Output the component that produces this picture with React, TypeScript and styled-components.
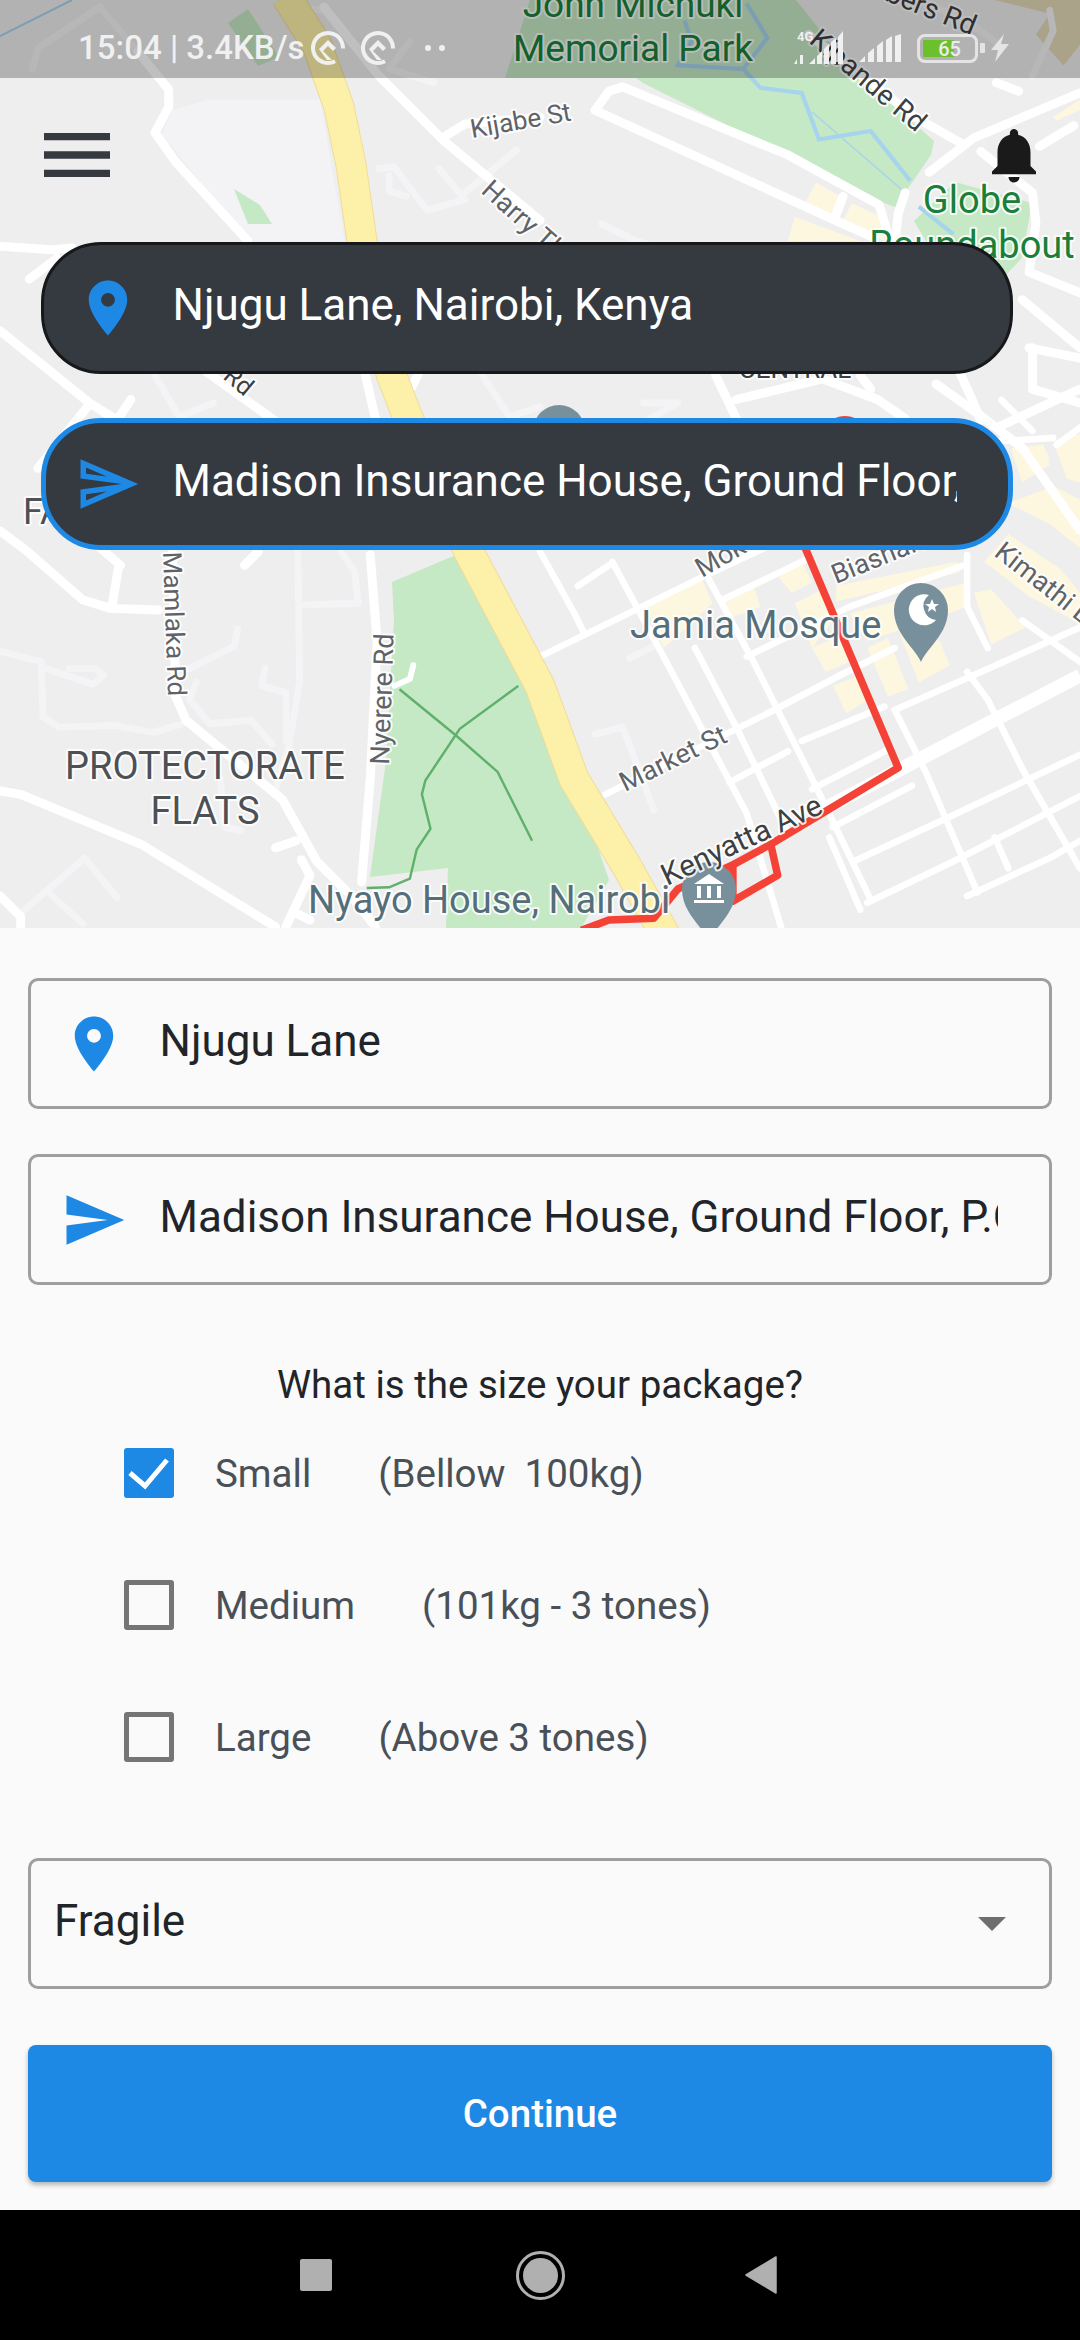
import React from 'react';
import styled, { createGlobalStyle } from 'styled-components';

const GlobalStyle = createGlobalStyle`
	* {
		box-sizing: border-box;
	}
	html,
	body {
		margin: 0;
		padding: 0;
		background: #fafafa;
		font-family: 'Roboto', 'Liberation Sans', sans-serif;
	}
`;

const Screen = styled.div`
	width: 1080px;
	height: 2340px;
	display: flex;
	flex-direction: column;
	background: #fafafa;
	overflow: hidden;
`;

const MapArea = styled.div`
	position: relative;
	height: 928px;
	flex: none;
	overflow: hidden;
	background: #eeeeee;
`;

const MapCanvas = styled.svg`
	position: absolute;
	inset: 0;
`;

const MapOverlay = styled.div`
	position: absolute;
	inset: 0;
	display: flex;
	flex-direction: column;
`;

const StatusBar = styled.div`
	height: 78px;
	flex: none;
	display: flex;
	align-items: center;
	padding: 0 0 0 78px;
	background: rgba(0, 0, 0, 0.25);
	color: #f0f0f0;
`;

const StatusText = styled.span`
	font-size: 33px;
	font-weight: 500;
	margin-top: 18px;
	line-height: 40px;
	white-space: nowrap;
	width: 231px;
`;

const StatusIcon = styled.svg<{ $left?: number }>`
	flex: none;
	margin-left: ${(p) => p.$left || 0}px;
	margin-top: 18px;
`;

const Battery = styled.div`
	position: relative;
	flex: none;
	width: 61px;
	height: 29px;
	margin-left: 16px;
	margin-top: 19px;
	border: 3.5px solid #e4e4e4;
	border-radius: 8px;
	color: #ececec;
	font-size: 20px;
	font-weight: 500;
	display: flex;
	align-items: center;
	justify-content: center;
`;

const BatteryFill = styled.div<{ $level: number }>`
	position: absolute;
	left: 3px;
	top: 3px;
	bottom: 3px;
	width: ${(p) => p.$level}%;
	background: #6cc02c;
`;

const BatteryLabel = styled.span`
	position: relative;
	margin-left: 4px;
	line-height: 1;
`;

const TopRow = styled.div`
	height: 164px;
	flex: none;
	display: flex;
	justify-content: space-between;
	align-items: flex-start;
	padding: 33px 33px 0;
`;

const BellIcon = styled.svg`
	margin-top: 11px;
`;

const Pill = styled.div<{ $active?: boolean }>`
	width: 972px;
	height: 132px;
	flex: none;
	margin: 0 0 44px 41px;
	display: flex;
	align-items: center;
	gap: 32px;
	padding-left: ${(p) => (p.$active ? 28.5 : 30.5)}px;
	background: #343a40;
	border: ${(p) => (p.$active ? '5px solid #1e88e5' : '3px solid #16181b')};
	border-radius: 60px;
`;

const PillText = styled.div`
	width: 784px;
	overflow: hidden;
	white-space: nowrap;
	color: #fff;
	font-size: 44px;
	line-height: 54px;
	margin-bottom: 6px;
`;

const Form = styled.div`
	flex: 1;
	display: flex;
	flex-direction: column;
	padding: 50px 28px 0;
`;

const Field = styled.div<{ $gap?: number }>`
	height: 131px;
	flex: none;
	margin-bottom: ${(p) => p.$gap || 0}px;
	display: flex;
	align-items: center;
	gap: 33px;
	padding-left: 29.5px;
	border: 3px solid #9e9e9e;
	border-radius: 10px;
`;

const FieldText = styled.div`
	width: 838px;
	overflow: hidden;
	white-space: nowrap;
	color: #212529;
	font-size: 44px;
	line-height: 54px;
	margin-bottom: 6px;
`;

const Question = styled.div`
	margin: 78px 0 41px;
	text-align: center;
	color: #212529;
	font-size: 38.5px;
	line-height: 44px;
`;

const Options = styled.div`
	display: flex;
	flex-direction: column;
	gap: 82px;
	padding-left: 96px;
`;

const Option = styled.div`
	height: 50px;
	display: flex;
	align-items: center;
	color: #495057;
	font-size: 38.5px;
`;

const Box = styled.div<{ $checked?: boolean }>`
	width: 50px;
	height: 50px;
	flex: none;
	margin-right: 41px;
	border-radius: 3px;
	background: ${(p) => (p.$checked ? '#1e88e5' : 'transparent')};
	border: ${(p) => (p.$checked ? 'none' : '5px solid #757575')};
`;

const Hint = styled.span`
	margin-left: 67px;
	white-space: pre;
`;

const Select = styled.div`
	height: 131px;
	flex: none;
	margin-top: 96px;
	display: flex;
	align-items: center;
	justify-content: space-between;
	padding: 0 43px 0 23px;
	border: 3px solid #9e9e9e;
	border-radius: 10px;
`;

const SelectValue = styled.span`
	color: #212529;
	font-size: 44px;
	line-height: 54px;
	margin-bottom: 6px;
`;

const Caret = styled.div`
	width: 0;
	height: 0;
	border-left: 14px solid transparent;
	border-right: 14px solid transparent;
	border-top: 14px solid #6e6e6e;
`;

const ContinueButton = styled.button`
	height: 137px;
	flex: none;
	margin-top: 56px;
	border: none;
	border-radius: 8px;
	background: #1e88e5;
	box-shadow: 0 3px 5px rgba(0, 0, 0, 0.28);
	color: #fff;
	font-family: inherit;
	font-size: 38.5px;
	font-weight: 500;
`;

const NavBar = styled.div`
	height: 130px;
	flex: none;
	display: flex;
	align-items: center;
	padding-left: 300px;
	gap: 180px;
	background: #000;
`;

const NavSquare = styled.div`
	width: 32px;
	height: 32px;
	border-radius: 2px;
	background: #b0b0b0;
	margin-right: 4px;
`;

const NavCircle = styled.div`
	width: 49px;
	height: 49px;
	border-radius: 50%;
	border: 3px solid #b0b0b0;
	padding: 4px;
	&::after {
		content: '';
		display: block;
		width: 100%;
		height: 100%;
		border-radius: 50%;
		background: #b0b0b0;
	}
`;

const MapLabel = styled.text<{ $size: number; $color: string }>`
	font-family: 'Roboto', sans-serif;
	font-size: ${(p) => p.$size}px;
	fill: ${(p) => p.$color};
	stroke: rgba(255, 255, 255, 0.85);
	stroke-width: 4px;
	paint-order: stroke;
	stroke-linejoin: round;
`;

const PIN =
	'M12 2C8.13 2 5 5.13 5 9c0 5.25 7 13 7 13s7-7.75 7-13c0-3.87-3.13-7-7-7zm0 9.5c-1.38 0-2.5-1.12-2.5-2.5s1.12-2.5 2.5-2.5 2.5 1.12 2.5 2.5-1.12 2.5-2.5 2.5z';
const SEND = 'M2.01 21L23 12 2.01 3 2 10l15 2-15 2z';
const SEND_OUTLINE =
	'M4.01 6.03l7.51 3.22-7.52-1 .01-2.22m7.5 8.72L4 17.97v-2.22l7.51-1M2.01 3L2 10l15 2-15 2 .01 7L23 12 2.01 3z';
const MENU = 'M3 18h18v-2H3v2zm0-5h18v-2H3v2zm0-5h18V6H3v2z';
const BELL =
	'M12 22c1.1 0 2-.9 2-2h-4c0 1.1.89 2 2 2zm6-6v-5c0-3.07-1.64-5.64-4.5-6.32V4c0-.83-.67-1.5-1.5-1.5s-1.5.67-1.5 1.5v.68C7.63 5.36 6 7.92 6 11v5l-2 2v1h16v-1l-2-2z';

const Icon = ({ d, fill, size = 66 }: { d: string; fill: string; size?: number }) => (
	<svg width={size} height={size} viewBox="0 0 24 24" style={{ flex: 'none' }}>
		<path d={d} fill={fill} />
	</svg>
);

// road traces, measured per quadrant of the map (1 unit = 1/2.904 px)
const QUADRANTS = [
	{
		at: 'translate(0,0) scale(.3444)',
		width: 26,
		areas: [['#f3f3f5', '500,320 600,290 930,290 1000,700 720,700 470,390']],
		minor: [
			'290,20 110,140 95,200',
			'290,20 400,150 480,250',
			'900,25 940,30 1100,220',
			'1190,120 1130,200 1260,240',
			'1100,490 1145,485 1190,545 1240,610 1350,580 1275,490',
			'1130,510 1130,555 1180,570',
			'1350,560 1500,435',
			'450,1090 520,1210 620,1170',
			'1400,1090 1480,1210 1568,1180',
		],
		major: [
			'400,150 490,260 490,310 450,385 510,470 720,700',
			'940,20 1100,220 1290,410 1568,640',
			'1285,400 1350,360 1568,340',
			'0,715 150,725 210,720',
			'165,750 85,810',
			'0,960 260,1170 340,1220',
			'380,1160 340,1220',
			'255,1180 110,1360',
			'600,1080 810,1230',
			'1060,1085 1090,1215',
			'1195,1125 1215,1085',
		],
	},
	{
		at: 'translate(540,0) scale(.3444)',
		width: 26,
		areas: [
			['#fef7e0', '800,530 880,575 850,630 770,590'],
			['#fef7e0', '905,590 980,625 1000,700 880,640'],
			['#fef7e0', '740,630 930,700 720,700'],
			['#fef7e0', '1370,1310 1460,1290 1480,1350 1400,1400'],
			['#fef7e0', '1490,1280 1568,1260 1568,1400 1530,1390'],
			['#fef7e0', '1490,340 1568,290 1568,320 1500,350'],
			['#e4d9b8', '1320,0 1480,40 1440,100 1520,190 1568,130 1568,0'],
		],
		minor: ['1480,30 1490,90 1430,220', '1100,0 1240,60 1320,120', '180,650 280,700 350,720', '300,1170 400,1170 320,1215'],
		major: [
			'160,320 200,265 240,252 720,450 985,595 1010,680',
			'160,320 880,650 970,690',
			'880,570 855,635',
			'780,100 1090,340 1230,420',
			'1130,500 1260,400 1568,270',
			'1325,240 1390,265',
			'1450,425 1550,365',
			'1060,560 1040,620 1030,710',
			'1280,440 1430,560 1440,650 1420,790 1568,850',
			'1220,1085 1250,1150 1280,1220',
			'1400,870 1568,1010',
			'1430,1010 1430,1130 1568,1170',
			'1420,1010 1568,1040',
			'1150,1115 1270,1200 1400,1300 1568,1540',
			'1330,1240 1568,1130',
			'510,1090 570,1215',
			'570,1160 820,1100 980,1160 1060,1215',
			'930,1090 960,1130',
		],
	},
	{
		at: 'translate(0,400) scale(.3444)',
		width: 26,
		areas: [],
		minor: [
			'0,730 120,760 125,920 170,950 330,945 445,965 530,940',
			'120,775 270,825 300,800 280,780 200,780',
			'550,780 680,715 690,665',
			'570,820 550,870 610,940 730,930 790,1000',
			'770,780 760,830 830,850 830,990',
			'865,440 870,820 840,1000 800,1130',
			'880,595 1040,590 1030,500 990,440',
			'245,1330 60,1490',
			'245,1330 340,1445',
			'140,1430 240,1520',
			'640,1100 650,1240 700,1250',
		],
		major: [
			'0,380 80,440 240,580 320,605 460,610',
			'345,480 325,600',
			'280,420 350,480',
			'710,480 750,440',
			'500,440 510,860 540,930 820,1160 920,1340 1020,1440 1090,1530',
			'0,1135 60,1145 410,1290 800,1530',
			'800,1300 860,1280',
			'875,1335 900,1380 830,1530',
			'0,1440 60,1500 60,1530',
			'1075,450 1095,700 1075,1100 1050,1400',
			'860,1490 900,1510',
		],
	},
	{
		at: 'translate(540,400) scale(.3444)',
		width: 19,
		areas: [
			['#fef7e0', '300,590 470,520 500,590 360,720'],
			['#fef7e0', '530,580 620,540 640,600 560,630'],
			['#fef7e0', '690,510 760,470 790,530 730,560'],
			['#fef7e0', '740,590 820,550 850,640 790,720'],
			['#fef7e0', '790,720 880,680 900,760 830,790'],
			['#fef7e0', '850,830 930,800 950,870 890,910'],
			['#fef7e0', '860,540 1210,470 1220,500 860,585'],
			['#fef7e0', '900,620 1240,530 1240,600 950,700'],
			['#fef7e0', '950,720 1010,690 1070,840 1010,860'],
			['#fef7e0', '1030,640 1160,700 1190,770 1100,820'],
			['#fef7e0', '1290,470 1360,390 1510,490 1568,560 1568,650 1420,570'],
			['#fef7e0', '1260,560 1310,550 1410,660 1310,710'],
			['#fef7e0', '1370,140 1460,130 1480,170 1400,220'],
			['#fef7e0', '1490,120 1568,100 1568,230 1530,200'],
			['#fef7e0', '1360,300 1490,250 1568,290 1568,430 1480,360'],
		],
		minor: ['160,970 240,950 290,1080 330,1190', '260,750 340,710'],
		major: [
			'0,745 480,510 800,360',
			'190,1145 560,960 680,900 870,800 1030,720',
			'550,1110 720,1020',
			'760,990 1000,890',
			'790,1130 1020,1010',
			'530,580 780,460',
			'600,745 900,600 1230,480',
			'1030,900 1280,790 1568,660',
			'850,1240 1080,1120',
			'910,1340 1190,1210 1568,1030',
			'950,1460 1200,1340 1568,1150',
			'1240,1440 1480,1330 1568,1280',
			'110,540 200,480',
			'0,440 100,620 130,680',
			'210,470 340,710 600,1200 700,1530',
			'450,720 570,950 720,1260',
			'490,520 620,760 800,1120 960,1450',
			'840,1270 930,1480',
			'1030,900 1120,1080 1270,1430',
			'1240,790 1300,870 1400,1070 1568,1360',
			'1320,1270 1360,1360',
			'1240,450 1240,600 1300,720',
			'1500,130 1568,80',
			'1330,120 1490,110',
			'1340,0 1430,90',
			'1400,640 1568,760',
		],
	},
];

const HIGHWAY = '286,-4 317,45 339,107 351,165 362,241 391,374 408,418 469,552 540,686 574,779 626,865 668,940';

const MapDrawing = () => (
	<MapCanvas width={1080} height={928} viewBox="0 0 1080 928">
		{QUADRANTS.map((q) => (
			<g key={q.at} transform={q.at}>
				{q.areas.map(([fill, points]) => (
					<polygon key={points} points={points} fill={fill} />
				))}
				{q.minor.map((points) => (
					<polyline key={points} points={points} fill="none" stroke="#f4f4f6" strokeWidth={20} strokeLinecap="round" strokeLinejoin="round" />
				))}
			</g>
		))}
		{/* parks */}
		<polygon points="505,78 530,0 796,0 843,59 934,141 931,155 895,207 884,203 781,152 643,83 636,78" fill="#c5e8c5" />
		<polygon points="234,189 260,205 272,224 248,224" fill="#c5e8c5" />
		<polygon points="228,23 248,9 279,57 258,66" fill="#c5e8c5" />
		<polygon points="451,557 392,582 394,620 386,761 370,877 448,868 446,928 581,928 609,880 574,779 540,686 469,552" fill="#c5e8c5" />
		<polygon points="914,221 955,182 1032,203 1022,258 1005,276 926,241" fill="#c5e8c5" />
		{/* rivers and trails */}
		<g transform="translate(540,0) scale(.3444)" fill="none" stroke="#a6d3ee">
			<polyline points="600,10 660,110 590,200 640,255 760,270 810,405 960,380 1075,525" strokeWidth={12} />
			<polyline points="420,60 440,120 400,190 590,200" strokeWidth={12} />
			<polyline points="790,325 1050,550" strokeWidth={4} />
			<polyline points="1395,865 1568,1010" strokeWidth={6} />
			<polyline points="1100,600 1200,680" strokeWidth={12} />
		</g>
		<polyline points="0,36 72,0" fill="none" stroke="#a6d3ee" strokeWidth={2} />
		<g transform="translate(0,400) scale(.3444)" fill="none" stroke="#5fb06c" strokeWidth={7}>
			<polyline points="1160,840 1325,975 1445,1080 1545,1280" />
			<polyline points="1505,830 1335,955 1235,1105 1225,1145 1250,1245 1210,1305 1190,1390 1130,1415 1065,1417" />
		</g>
		{QUADRANTS.map((q) => (
			<g key={q.at} transform={q.at}>
				{q.major.map((points) => (
					<polyline key={points} points={points} fill="none" stroke="#fff" strokeWidth={q.width} strokeLinecap="round" strokeLinejoin="round" />
				))}
			</g>
		))}
		<polyline points="1145,830 1190,810 1200,770" transform="translate(0,400) scale(.3444)" fill="none" stroke="#fff" strokeWidth={17} strokeLinecap="round" />
		<polyline points="820,1190 1568,800" transform="translate(540,400) scale(.3444)" fill="none" stroke="#fff" strokeWidth={40} />
		{/* highway */}
		<polyline points={HIGHWAY} fill="none" stroke="#f0dc9a" strokeWidth={31} strokeLinejoin="round" />
		<polyline points={HIGHWAY} fill="none" stroke="#fdf0a9" strokeWidth={29} strokeLinejoin="round" />
		{/* route */}
		<g transform="translate(540,400) scale(.3444)" fill="none" stroke="#f44336" strokeWidth={22} strokeLinejoin="round">
			<polyline points="770,430 1040,1068 670,1290 560,1350 560,1455 690,1380 670,1290" />
			<polyline points="560,1350 400,1420 330,1505 200,1510 120,1540" />
		</g>
		{/* pins */}
		<circle cx={559} cy={431} r={26} fill="#78909c" />
		<circle cx={845} cy={442} r={26} fill="#ea4335" />
		<g transform="translate(921,610)">
			<path d="M0 52C-6 38-27 24-27 0a27 27 0 0 1 54 0C27 24 6 38 0 52z" fill="#78909c" />
			<path d="M8-15a15.5 15.5 0 1 0 7 25A14 14 0 0 1 8-15z" fill="#fff" />
			<path d="M11-11l2 5 5 0-4 3 1 5-4-3-4 3 1-5-4-3 5 0z" fill="#fff" />
		</g>
		<g transform="translate(709,889)">
			<path d="M0 52C-6 38-27 24-27 0a27 27 0 0 1 54 0C27 24 6 38 0 52z" fill="#78909c" />
			<path d="M-15-5L0-15 15-5zM-12-3h4v12h-4zM-2-3h4v12h-4zM8-3h4v12h-4zM-15 11h30v3h-30z" fill="#fff" />
		</g>
		{/* labels */}
		<MapLabel $size={37} $color="#188038" textAnchor="middle" x={633} y={17}>John Michuki</MapLabel>
		<MapLabel $size={37} $color="#188038" textAnchor="middle" x={633} y={61}>Memorial Park</MapLabel>
		<MapLabel $size={38} $color="#188038" textAnchor="middle" x={972} y={213}>Globe</MapLabel>
		<MapLabel $size={38} $color="#188038" textAnchor="middle" x={972} y={258}>Roundabout</MapLabel>
		<MapLabel $size={26} $color="#5f6368" transform="translate(472,138) rotate(-10)">Kijabe St</MapLabel>
		<MapLabel $size={27} $color="#5f6368" transform="translate(480,192) rotate(42)">Harry Thuku</MapLabel>
		<MapLabel $size={28} $color="#3c4043" transform="translate(808,42) rotate(40)">Kipande Rd</MapLabel>
		<MapLabel $size={28} $color="#3c4043" transform="translate(884,0) rotate(22)">bers Rd</MapLabel>
		<MapLabel $size={26} $color="#3c4043" textAnchor="middle" x={795} y={378}>CENTRAL</MapLabel>
		<MapLabel $size={25} $color="#3c4043" transform="translate(222,378) rotate(40)">Rd</MapLabel>
		<MapLabel $size={36} $color="#4d5156" x={23} y={524}>FAIR</MapLabel>
		<MapLabel $size={26} $color="#5f6368" transform="translate(163,552) rotate(88)">Mamlaka Rd</MapLabel>
		<MapLabel $size={27} $color="#5f6368" transform="translate(389,765) rotate(-88)">Nyerere Rd</MapLabel>
		<MapLabel $size={38} $color="#4d5156" textAnchor="middle" x={205} y={779}>PROTECTORATE</MapLabel>
		<MapLabel $size={38} $color="#4d5156" textAnchor="middle" x={205} y={824}>FLATS</MapLabel>
		<MapLabel $size={38} $color="#546e7a" x={308} y={913}>Nyayo House, Nairobi</MapLabel>
		<MapLabel $size={38} $color="#546e7a" x={630} y={638}>Jamia Mosque</MapLabel>
		<MapLabel $size={27} $color="#5f6368" transform="translate(702,578) rotate(-30)">Moktar</MapLabel>
		<MapLabel $size={27} $color="#5f6368" transform="translate(836,584) rotate(-22)">Biashara</MapLabel>
		<MapLabel $size={27} $color="#5f6368" transform="translate(993,555) rotate(38)">Kimathi Ln</MapLabel>
		<MapLabel $size={27} $color="#5f6368" transform="translate(625,792) rotate(-26)">Market St</MapLabel>
		<MapLabel $size={30} $color="#3c4043" transform="translate(667,886) rotate(-25)">Kenyatta Ave</MapLabel>
	</MapCanvas>
);

const RingGlyph = () => (
	<>
		<circle cx="18" cy="18" r="15" fill="none" stroke="#f0f0f0" strokeWidth="4" strokeDasharray="78 16" transform="rotate(62 18 18)" />
		<path d="M9 19l9-9 8 8-3 3-5-5-5 5 9 9h-5z" fill="#f0f0f0" />
	</>
);

const StatusRow = () => (
	<StatusBar>
		<StatusText>15:04 | 3.4KB/s</StatusText>
		<StatusIcon width={36} height={36} viewBox="0 0 36 36" $left={1}>
			<RingGlyph />
		</StatusIcon>
		<StatusIcon width={36} height={36} viewBox="0 0 36 36" $left={14}>
			<RingGlyph />
		</StatusIcon>
		<StatusIcon width={24} height={8} viewBox="0 0 24 8" $left={28}>
			<circle cx="4" cy="4" r="3" fill="#f0f0f0" />
			<circle cx="18" cy="4" r="3" fill="#f0f0f0" />
		</StatusIcon>
		<StatusIcon width={58} height={34} viewBox="0 0 58 34" $left={343}>
			<text x="6" y="10" fontSize="13" fontWeight="700" fontFamily="Roboto" fill="#f0f0f0">4G</text>
			<path d="M3 33l3-5v5zM9 24l3 0v9H9z" fill="#f0f0f0" />
			<path d="M18 33l6-6v6zM26 25l5-5v13h-5zM33 18l5-5v20h-5zM40 11l5-4v26h-5zM47 6l5-6v33h-5z" fill="#f0f0f0" />
		</StatusIcon>
		<StatusIcon width={42} height={28} viewBox="0 0 42 28" $left={10}>
			<path d="M0 28l6-6v6zM9 28v-9l6-5v14zM18 28V12l6-5v21zM27 28V6l6-4v26zM36 28V2l6-2v28z" fill="#f0f0f0" />
		</StatusIcon>
		<Battery>
			<BatteryFill $level={57} />
			<BatteryLabel>65</BatteryLabel>
		</Battery>
		<StatusIcon width={5} height={10} viewBox="0 0 5 10" $left={2}>
			<rect width="5" height="10" rx="1" fill="#e4e4e4" />
		</StatusIcon>
		<StatusIcon width={18} height={28} viewBox="0 0 18 28" $left={6}>
			<path d="M13 0L0 16h7L4 28 18 10h-8z" fill="#e4e4e4" />
		</StatusIcon>
	</StatusBar>
);

const SIZES = [
	{ label: 'Small', hint: '(Bellow  100kg)', checked: true },
	{ label: 'Medium', hint: '(101kg - 3 tones)', checked: false },
	{ label: 'Large', hint: '(Above 3 tones)', checked: false },
];

const App = () => (
	<Screen>
		<GlobalStyle />
		<MapArea>
			<MapDrawing />
			<MapOverlay>
				<StatusRow />
				<TopRow>
					<Icon d={MENU} fill="#343a40" size={88} />
					<BellIcon width={66} height={66} viewBox="0 0 24 24">
						<path d={BELL} fill="#1a1a1a" />
					</BellIcon>
				</TopRow>
				<Pill>
					<Icon d={PIN} fill="#1e88e5" />
					<PillText>Njugu Lane, Nairobi, Kenya</PillText>
				</Pill>
				<Pill $active>
					<Icon d={SEND_OUTLINE} fill="#1e88e5" />
					<PillText>Madison Insurance House, Ground Floor, P.O. Box 30047</PillText>
				</Pill>
			</MapOverlay>
		</MapArea>
		<Form>
			<Field $gap={45}>
				<Icon d={PIN} fill="#1e88e5" />
				<FieldText>Njugu Lane</FieldText>
			</Field>
			<Field>
				<Icon d={SEND} fill="#1e88e5" />
				<FieldText>Madison Insurance House, Ground Floor, P.O. Box 30047</FieldText>
			</Field>
			<Question>What is the size your package?</Question>
			<Options>
				{SIZES.map((size) => (
					<Option key={size.label}>
						<Box $checked={size.checked}>
							{size.checked && (
								<svg width={50} height={50} viewBox="0 0 50 50">
									<path d="M6 25l15 13L43 12" fill="none" stroke="#fff" strokeWidth="5" />
								</svg>
							)}
						</Box>
						{size.label}
						<Hint>{size.hint}</Hint>
					</Option>
				))}
			</Options>
			<Select>
				<SelectValue>Fragile</SelectValue>
				<Caret />
			</Select>
			<ContinueButton>Continue</ContinueButton>
		</Form>
		<NavBar>
			<NavSquare />
			<NavCircle />
			<svg width={32} height={38} viewBox="0 0 32 38">
				<path d="M31 1v36L1 19z" fill="#b0b0b0" stroke="#b0b0b0" strokeWidth="1.5" strokeLinejoin="round" />
			</svg>
		</NavBar>
	</Screen>
);

export default App;
